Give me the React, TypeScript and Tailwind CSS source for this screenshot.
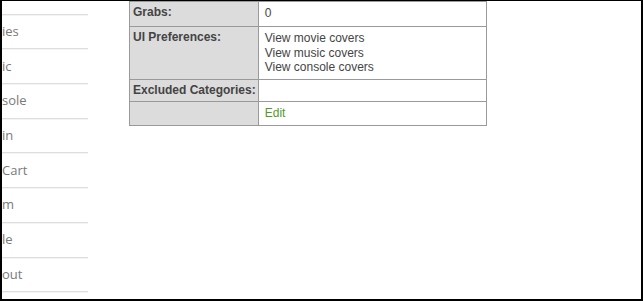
export default function App() {
  const items = ["Search", "ies", "ic", "sole", "in", "Cart", "m", "le", "out"];
  const label = "align-top bg-[#dcdcdc] border border-[#9a9a9a] pl-[3px] pr-[2px] pt-[3px] pb-[3px] font-bold text-[#444] whitespace-nowrap";
  const value = "align-top border border-[#9a9a9a] pl-[6px] pr-[5px] pt-[4px] pb-[4px] text-[#444]";
  return (
    <div className="w-[643px] h-[301px] overflow-hidden bg-white border-t border-l-2 border-r-2 border-b-2 border-black flex">
      <div className="w-[86px] shrink-0 -mt-[21px] flex flex-col font-['Open_Sans',sans-serif]">
        {items.map((t) => (
          <div
            key={t}
            className="h-[34.7px] shrink-0 flex items-center border-b border-[#dedede] shadow-[0_1px_0_#f4f4f4] text-[13px] text-[#7a7a7a] leading-none"
          >
            {t}
          </div>
        ))}
      </div>
      <div className="ml-[41px]">
        <table className="border-collapse w-[358px] text-[12px] leading-[15px] font-['Liberation_Sans',Arial,sans-serif]">
          <colgroup>
            <col className="w-[127px]" />
            <col />
          </colgroup>
          <tbody>
            <tr className="h-[25px]">
              <td className={label}>Grabs:</td>
              <td className={value}>0</td>
            </tr>
            <tr>
              <td className={label}>UI Preferences:</td>
              <td className={value + " leading-[14.5px]"}>
                <div>View movie covers</div>
                <div>View music covers</div>
                <div>View console covers</div>
              </td>
            </tr>
            <tr>
              <td className={label}>Excluded Categories:</td>
              <td className={value}></td>
            </tr>
            <tr>
              <td className={label}></td>
              <td className={value}>
                <a className="text-[#56962a]">Edit</a>
              </td>
            </tr>
          </tbody>
        </table>
      </div>
    </div>
  );
}
